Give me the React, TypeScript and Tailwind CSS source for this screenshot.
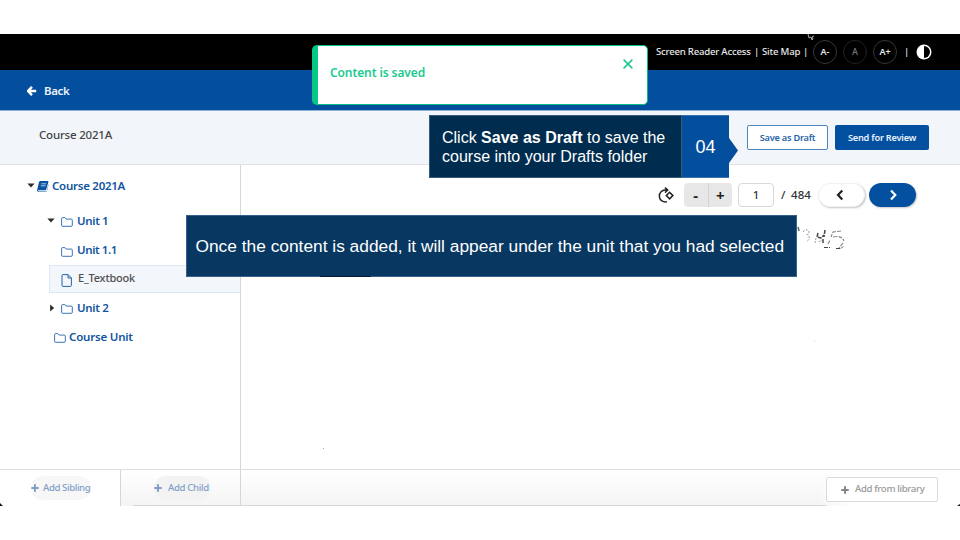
import React from "react";

const ui = "font-['Noto_Sans',sans-serif]";
const arial = "font-['Liberation_Sans',sans-serif]";

function Folder() {
  return (
    <svg className="mt-[3px] shrink-0" width="12" height="10" viewBox="0 0 12 10" fill="none" stroke="#2465ad" strokeWidth="0.9">
      <path d="M.6 8.3V1.5Q.6.6 1.5.6h2.4l1.3 1.5h5.1q1 0 1 1v5.2q0 1-1 1H1.6q-1 0-1-1Z" />
    </svg>
  );
}

function Plus({ color }: { color: string }) {
  return (
    <svg className="shrink-0" width="8" height="8" viewBox="0 0 8 8" stroke={color} strokeWidth="2">
      <path d="M4 .3v7.4M.3 4h7.4" />
    </svg>
  );
}

function Caret({ open }: { open: boolean }) {
  return (
    <svg className="shrink-0" width="8" height="8" viewBox="0 0 8 8" fill="#2d2d2d">
      <path d={open ? "M.4 1.6h7.2L4 5.6Z" : "M2.1.4v7.2L6.2 4Z"} />
    </svg>
  );
}

function TopBar() {
  return (
    <div className="flex h-9 items-center bg-black pl-[656px] text-[9.6px] font-medium whitespace-nowrap text-[#e8e8e8]">
      <span className="w-[96px] tracking-[-0.22px]">Screen Reader Access</span>
      <span className="w-[10px] pl-[2px]">|</span>
      <span className="w-[40px] tracking-[-0.2px]">Site Map</span>
      <span className="w-[11px] pl-[1px]">|</span>
      <span className="flex size-6 items-center justify-center rounded-full border border-[#383838] text-[9px] font-semibold">A-</span>
      <span className="ml-[6px] flex size-6 items-center justify-center rounded-full border border-[#222] text-[9px] text-[#777]">A</span>
      <span className="ml-[6px] flex size-6 items-center justify-center rounded-full border border-[#383838] text-[9px] font-semibold">A+</span>
      <span className="ml-[7px] w-[12px]">|</span>
      <svg width="16" height="16" viewBox="0 0 16 16">
        <circle cx="8" cy="8" r="7.5" fill="#fff" />
        <path d="M8 2a6 6 0 0 1 0 12Z" fill="#000" />
      </svg>
    </div>
  );
}

function Sidebar() {
  return (
    <aside className="flex w-[241px] shrink-0 flex-col border-r border-[#d6d6d6] pt-[7px] text-[11.5px] font-semibold whitespace-nowrap text-[#1254a0]">
      <div className="flex h-7 items-center pl-[27px]">
        <Caret open />
        <svg className="ml-[2px]" width="12" height="11" viewBox="0 0 12 11">
          <path d="M3.3 0h7.4q1 0 .7 1L9.2 8.5q-.3.8-1.2.8H1.7q-.8 0-.7.7.1.4.7.4h7.7L11.6 3v1L9.9 10q-.3 1-1.3 1H1.5Q-.2 11 .2 8.8L2 1q.3-1 1.3-1Z" fill="#0752a1" />
          <path d="M4.3 2.8h4.8M3.8 4.8h4.8" stroke="#fff" strokeWidth=".7" />
        </svg>
        <span className="ml-[3px] tracking-[-0.26px]">Course 2021A</span>
      </div>
      <div className="mt-[6px] flex h-[29px] items-center pl-[47px]">
        <Caret open />
        <span className="w-[6px]" />
        <Folder />
        <span className="ml-[4px] tracking-[-0.35px]">Unit 1</span>
      </div>
      <div className="flex h-[30px] items-center pl-[61px]">
        <Folder />
        <span className="ml-[4px] tracking-[-0.4px]">Unit 1.1</span>
      </div>
      <div className="ml-[49px] flex h-7 items-center border border-r-0 border-[#dce8f4] bg-[#f3f6fa] pl-[11px] font-medium text-[#505050]">
        <svg className="mt-[2px]" width="12" height="13" viewBox="0 0 12 13" fill="none" stroke="#2465ad">
          <path d="M7 .6H2Q1 .6 1 1.6v9.8q0 1 1 1h7.4q1 0 1-1V4Zm0 0V4h3.4" />
        </svg>
        <span className="ml-[5px] pb-[1px] text-[11px] tracking-[-0.2px]">E_Textbook</span>
      </div>
      <div className="flex h-[29px] items-center pl-[48px]">
        <Caret open={false} />
        <span className="w-[5px]" />
        <Folder />
        <span className="ml-[4px] tracking-[-0.3px]">Unit 2</span>
      </div>
      <div className="flex h-[29px] items-center pl-[54px]">
        <Folder />
        <span className="ml-[3px] tracking-[-0.2px]">Course Unit</span>
      </div>
    </aside>
  );
}

function Viewer() {
  return (
    <main className="relative flex-1">
      <div className="flex h-[30px] items-center pt-[30px] pl-[417px] text-[11.5px] font-medium text-[#333]">
        <svg width="17" height="17" viewBox="0 0 17 17" fill="none" stroke="#222" strokeWidth="1.5">
          <path d="M9 14.6A5.9 5.9 0 1 1 7.8 3.1h1.4M7 .6l2.7 2.5L7 5.6" />
          <path d="m11.6 5.3 3.3 3.3-3.3 3.3-3.3-3.3Z" />
        </svg>
        <div className="ml-[9px] flex h-6 w-[48px] shrink-0 overflow-hidden rounded-sm bg-[#e7e7e7] text-[15px] font-bold text-[#222]">
          <span className="flex flex-1 items-center justify-center border-r border-[#d3d3d3]">-</span>
          <span className="flex flex-1 items-center justify-center">+</span>
        </div>
        <span className="ml-[6px] flex h-6 w-9 shrink-0 items-center justify-center rounded-sm border border-[#d8d8d8] bg-white">1</span>
        <span className="ml-[7px] w-[10px]">/</span>
        <span className="w-[27px] tracking-[0.1px]">484</span>
        <span className="flex h-6 w-[47px] shrink-0 items-center justify-center rounded-full border border-[#f1f1f1] bg-white pr-[3px] shadow-[1px_1px_2px_#c6c6c6]">
          <svg width="10" height="12" viewBox="0 0 10 12" fill="none" stroke="#222" strokeWidth="2.2"><path d="M7.3 1.5 3 6l4.3 4.5" /></svg>
        </span>
        <span className="ml-1 flex h-6 w-[47px] shrink-0 items-center justify-center rounded-full bg-[#034fa0] shadow-[1px_1px_2px_#c6c6c6]">
          <svg width="10" height="12" viewBox="0 0 10 12" fill="none" stroke="#fff" strokeWidth="2.2"><path d="M3 1.5 7.3 6 3 10.5" /></svg>
        </span>
      </div>
      <svg className="absolute top-[60px] left-[555px]" width="55" height="130" viewBox="0 0 55 130" fill="none" stroke="#666">
        <path d="m2 2 1 4" strokeWidth="1.5" />
        <path d="M7 7q3-4 6-1v3l-3 1m3 1q1 4-2 5" strokeDasharray="2 1.5" stroke="#999" />
        <path d="m22 8-1 4 4 1 3-3m1-5-1 7m-1 2v4" strokeDasharray="4 1" stroke="#444" strokeWidth="1.5" />
        <path d="m20 13-1 5m4-1 3-2" strokeDasharray="2 1" stroke="#999" />
        <path d="m45 6-8 1-2 5m2 0q9-2 11 4m-1 2-4 5m-11-4 2-4" strokeDasharray="4 1.2" stroke="#888" strokeWidth="1.2" />
        <path d="M28 22.5h6m6 1h5l2-2" stroke="#444" strokeDasharray="4 1" />
        <path d="M18 116h1" stroke="#ccc" />
      </svg>
      <span className="absolute top-[283px] left-[82px] size-px bg-[#aaa]" />
    </main>
  );
}

export default function App() {
  return (
    <div className={`relative h-[540px] w-[960px] overflow-hidden bg-white pt-[34px] ${ui}`}>
      <div className="flex h-[472px] flex-col overflow-hidden">
        <TopBar />
        <header className="flex h-10 items-center bg-[#034f9e] pl-[27px] text-[11.5px] font-semibold text-[#eaf2fa]">
          <svg className="mt-[2px]" width="10" height="10" viewBox="0 0 10 10" fill="none" stroke="#fff" strokeWidth="2.4"><path d="M5 .8.9 5 5 9.2M1 5h8.2" /></svg>
          <span className="ml-[7px] pt-[2px] tracking-[-0.4px]">Back</span>
        </header>
        <section className="flex h-[55px] items-center border-t border-b border-t-[#8bb0d3] border-b-[#dfe2e5] bg-[#f2f6fa] pl-[39px] whitespace-nowrap">
          <h1 className="w-[708px] pb-[5px] text-[11.5px] font-medium tracking-[-0.2px] text-[#444]">Course 2021A</h1>
          <button className="h-[25px] w-[81px] rounded-[2px] border border-[#4e85bd] bg-white text-[9.2px] font-semibold tracking-[-0.22px] text-[#2863a6]">Save as Draft</button>
          <button className="ml-[7px] h-[25px] w-[94px] rounded-[2px] bg-[#034fa0] text-[9.2px] font-semibold tracking-[-0.22px] text-[#eaf2fc]">Send for Review</button>
        </section>
        <div className="flex h-[304px]">
          <Sidebar />
          <Viewer />
        </div>
        <footer className="flex h-[37px] border-t border-[#dedede] bg-linear-to-b from-white to-[#f4f4f4] text-[9.6px] font-medium whitespace-nowrap text-[#7f9fc9]">
          <div className="flex w-[121px] items-center border-r border-[#d6d6d6] bg-white pl-[31px]">
            <span className="flex h-6 w-[60px] items-center rounded-full bg-[#f7f7f7]"><Plus color="#7f9fc9" /><span className="ml-[4px] tracking-[-0.4px]">Add Sibling</span></span>
          </div>
          <div className="flex w-[120px] items-center border-r border-[#d6d6d6] pl-[33px]">
            <span className="flex h-6 w-[57px] items-center rounded-full bg-[#f3f3f3]"><Plus color="#7f9fc9" /><span className="ml-[6px] tracking-[-0.35px]">Add Child</span></span>
          </div>
          <div className="flex flex-1 items-center justify-end bg-linear-to-r from-transparent from-80% to-white to-85% pr-[22px]">
            <button className="mt-[3px] flex h-[25px] w-[112px] items-center rounded-[2px] border border-[#dadada] bg-white pl-[14px] text-[#999]"><Plus color="#858585" /><span className="ml-[6px] tracking-[-0.35px]">Add from library</span></button>
          </div>
        </footer>
      </div>

      <svg className="absolute top-[34px] left-[805px]" width="11" height="7" viewBox="0 0 11 7" fill="none" stroke="#aaa"><path d="m3 0 1 4 2-1 1 3 1-1-1-2 2-1" /></svg>

      <div className="absolute top-[45px] left-[312px] flex h-[60px] w-[336px] items-center rounded-[5px] border border-l-[6px] border-[#09bd7e] border-l-[#06c886] bg-white pr-[14px] pl-3 text-[12px] font-semibold tracking-[-0.1px] text-[#20ca8e]">
        <span className="pb-[5px]">Content is saved</span>
        <svg className="mb-[22px] ml-auto" width="10" height="10" viewBox="0 0 10 10" stroke="#20ca8e" strokeWidth="1.6"><path d="m.6.6 8.8 8.8m0-8.8L.6 9.4" /></svg>
      </div>

      <div className={`absolute top-[115px] left-[429px] flex h-[63px] w-[309px] whitespace-nowrap text-white ${arial}`}>
        <div className="w-[253px] border border-[#365c7d] bg-[#002d4f] pt-[12px] pl-[12px] text-[16px] leading-[19px]">
          Click <b>Save as Draft</b> to save the<br />course into your Drafts folder
        </div>
        <div className="flex w-[47px] items-center justify-center border-y border-[#3974ae] bg-[#034f9e] pt-[2px] text-[18px]">04</div>
        <svg className="mt-[23px]" width="9" height="26" viewBox="0 0 9 26" fill="#034f9e"><path d="m0 0 9 12.5L0 25Z" /></svg>
      </div>

      <div className={`absolute top-[215px] left-[186px] flex h-[62px] w-[611px] items-center border border-[#35618a] bg-[#083861] pl-[8.5px] text-[17.33px] leading-5 whitespace-nowrap text-white ${arial}`}>Once the content is added, it will appear under the unit that you had selected</div>
      <span className="absolute top-[276px] left-[320px] h-px w-[51px] bg-[#061c34]" />

      <svg className="absolute top-[503px] left-0" width="960" height="3" viewBox="0 0 960 3"><path d="M0 0 3 3H0ZM960 1v2h-3Z" fill="#101018" /><path d="M133 2.5h693" stroke="#d8d8d8" /></svg>
    </div>
  );
}
